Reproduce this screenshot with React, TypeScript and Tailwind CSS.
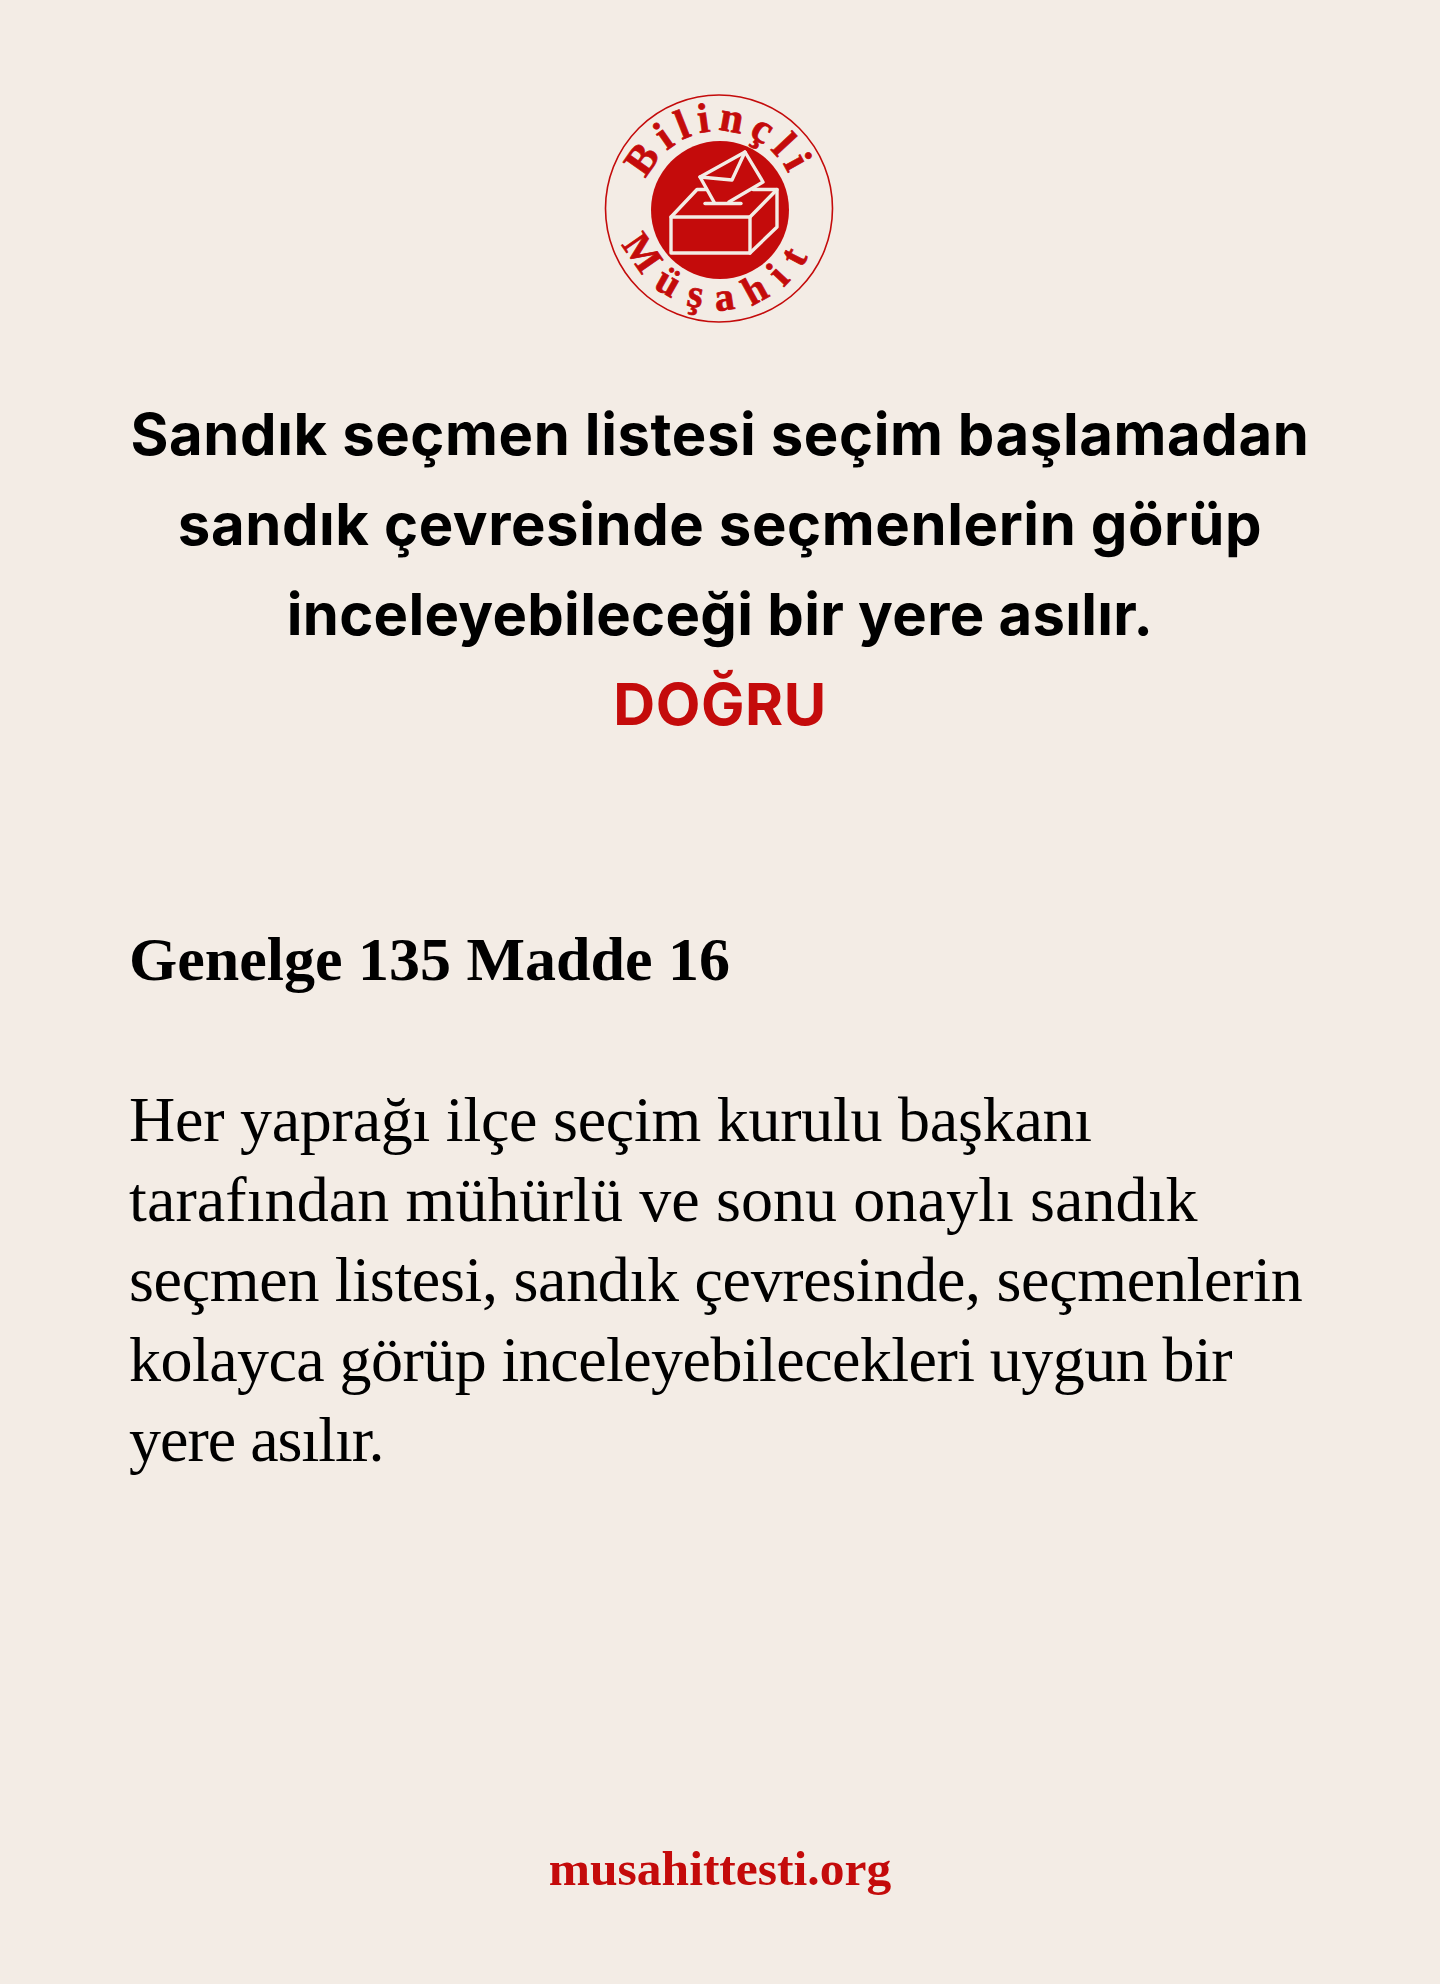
const bodyLines = [
    { text: 'Her yaprağı ilçe seçim kurulu başkanı', tracking: 'tracking-[-0.25px]' },
    { text: 'tarafından mühürlü ve sonu onaylı sandık', tracking: 'tracking-[0.1px]' },
    { text: 'seçmen listesi, sandık çevresinde, seçmenlerin', tracking: 'tracking-[-0.3px]' },
    { text: 'kolayca görüp inceleyebilecekleri uygun bir', tracking: 'tracking-[-0.55px]' },
    { text: 'yere asılır.', tracking: 'tracking-[-1px]' },
];

function Logo() {
    return (
        <svg viewBox="0 0 260 250" className="block h-[250px] w-[260px]" fill="none">
            <defs>
                <path id="logo-top" d="M 51 129 A 78 78 0 0 1 207 129" />
                <path id="logo-bottom" d="M 28 129 A 101 101 0 0 0 230 129" />
            </defs>
            <circle cx="129" cy="128.5" r="113.5" stroke="#c40b0b" strokeWidth="1.6" />
            <circle cx="130" cy="130" r="69" fill="#c40b0b" />
            <text
                fill="#c40b0b"
                stroke="#c40b0b"
                strokeWidth="0.7"
                fontFamily="'Liberation Serif', serif"
                fontWeight="700"
                fontSize="42"
            >
                <textPath href="#logo-top" startOffset="50%" textAnchor="middle" letterSpacing="7">
                    Bilinçli
                </textPath>
            </text>
            <text
                fill="#c40b0b"
                stroke="#c40b0b"
                strokeWidth="0.7"
                fontFamily="'Liberation Serif', serif"
                fontWeight="700"
                fontSize="40"
            >
                <textPath href="#logo-bottom" startOffset="50%" textAnchor="middle" letterSpacing="15">
                    Müşahit
                </textPath>
            </text>
            <g stroke="#f3ece5" strokeWidth="3.4" strokeLinejoin="round" strokeLinecap="round">
                <path d="M 81 137 H 160 V 173 H 81 Z" />
                <path d="M 81 137 L 107 109.500 H 116" />
                <path d="M 163 109.500 H 187 L 160 137" />
                <path d="M 187 109.500 V 147 L 160 173" />
                <path d="M 115 123.500 H 151" />
                <path d="M 124 122 L 110 97 L 155 72 L 173 102 L 139 122" />
                <path d="M 110 97 L 142 100 L 155 72" />
            </g>
        </svg>
    );
}

export default function App() {
    return (
        <div className="flex min-h-[1984px] flex-col bg-[#f3ece5] text-black">
            <div className="flex justify-center pt-[80px]">
                <Logo />
            </div>

            <div className="mt-[59px] text-center font-['Inter','Liberation_Sans',sans-serif] text-[58px] font-bold leading-[90px] tracking-[0.6px]">
                <p>Sandık seçmen listesi seçim başlamadan</p>
                <p>sandık çevresinde seçmenlerin görüp</p>
                <p className="tracking-[0.3px]">inceleyebileceği bir yere asılır.</p>
                <p className="text-[#c40b0b]">DOĞRU</p>
            </div>

            <div className="mt-[170px] px-[129px] font-['Liberation_Serif',serif]">
                <h2 className="text-[62px] font-bold leading-[80px]">
                    Genelge 135 Madde 16
                </h2>
                <div className="mt-[81px] text-[64px] leading-[80px]">
                    {bodyLines.map((line) => (
                        <p key={line.text} className={line.tracking}>
                            {line.text}
                        </p>
                    ))}
                </div>
            </div>

            <div className="mt-auto pb-[87px] text-center font-['Liberation_Serif',serif] text-[49.5px] font-bold leading-[56px] text-[#c40b0b]">
                musahittesti.org
            </div>
        </div>
    );
}
